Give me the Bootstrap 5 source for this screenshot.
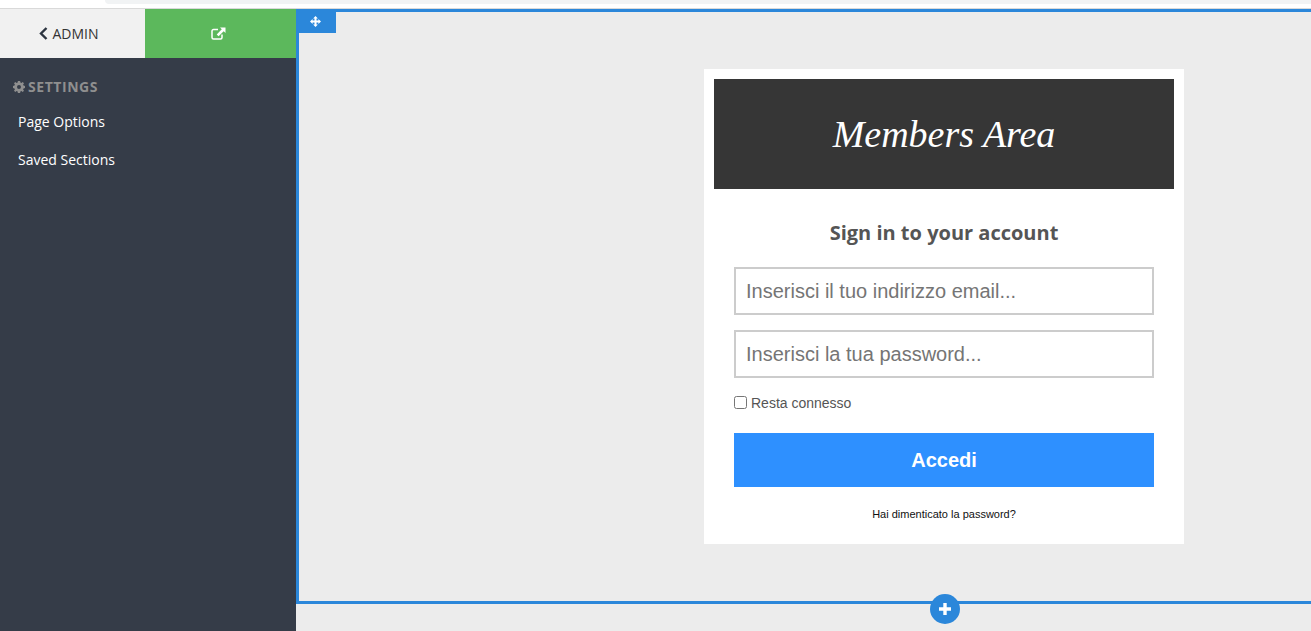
<!DOCTYPE html>
<html lang="it">
<head>
<meta charset="utf-8">
<title>Members Area</title>
<link href="https://cdn.jsdelivr.net/npm/bootstrap@5.3.0/dist/css/bootstrap.min.css" rel="stylesheet">
<style>
html,body{height:631px;overflow:hidden;background:#ececec;font-family:"Open Sans",sans-serif}
.top-strip{height:9px;background:#fff;border-bottom:1px solid #d9d9d9;padding-left:105px}
.top-pill{height:4px;background:#f1f3f4;border-bottom-left-radius:8px}
.side-col{width:296px;height:622px;background:#353c48}
.tab-admin{height:49px;width:145px;background:#f1f1f1;color:#333;font-size:14px;padding-right:7px}
.tab-view{height:49px;width:151px;background:#5cb85c;padding-right:4px}
.side-head{color:#8f8f8f;font-size:14px;font-weight:700;letter-spacing:.55px;padding:19px 0 0 13px;line-height:19px;gap:3px}
.side-link{display:block;color:#fff;font-size:14px;line-height:38px;padding-left:18px;text-decoration:none}
.side-list{padding-top:7px}
.canvas-wrap{flex:1 1 auto;height:622px;position:relative}
.canvas-box{height:595px;border-top:3px solid #2b87da;border-bottom:3px solid #2b87da;border-left:3px solid #2b87da;padding:57px 127px 0 0}
.move-tag{position:absolute;left:0;top:0;width:40px;height:24px;background:#2b87da;padding-right:1px}
.add-dot{position:absolute;left:634px;top:585px;width:30px;height:30px;border-radius:50%;background:#2b87da}
.login-box{width:480px;height:475px;background:#fff;padding:10px}
.login-banner{height:110px;background:#363636;color:#fff;font-family:"Liberation Serif",serif;font-style:italic;font-size:38px}
.login-body{padding:0 20px}
.login-title{font-size:20px;font-weight:700;color:#555;text-align:center;line-height:27px;margin:30px 0 21px}
.login-input{display:block;width:100%;height:48px;border:2px solid #ccc;border-radius:0;padding:0 10px;font-family:"Liberation Sans",sans-serif;font-size:20px;margin-bottom:15px;outline:0}
.login-input::placeholder{color:#757575;opacity:1}
.keep-row{font-family:"Liberation Sans",sans-serif;font-size:14px;color:#555;height:20px;margin:4px 0 20px}
.keep-row input{width:13px;height:13px;margin:-2px 4px 0 0}
.login-btn{height:54px;width:100%;background:#2e90ff;color:#fff;border:0;border-radius:0;font-family:"Liberation Sans",sans-serif;font-weight:700;font-size:20px}
.forgot{display:block;text-align:center;font-family:"Liberation Sans",sans-serif;font-size:11px;color:#111;text-decoration:none;margin-top:21px;line-height:12px}
</style>
</head>
<body>
<div class="top-strip"><div class="top-pill"></div></div>
<div class="d-flex">
  <aside class="side-col flex-shrink-0">
    <div class="d-flex">
      <a class="tab-admin d-flex align-items-center justify-content-center gap-1 text-decoration-none" href="#">
        <svg width="9" height="13" viewBox="0 0 9 13"><path d="M7.500 1 2 6.500 7.500 12" fill="none" stroke="#2c3440" stroke-width="2.400"/></svg>ADMIN</a>
      <a class="tab-view d-flex align-items-center justify-content-center" href="#" aria-label="Open">
        <svg width="15" height="13" viewBox="0 0 15 13"><path d="M11 7.500V10.500A1.500 1.500 0 0 1 9.500 12H2.500A1.500 1.500 0 0 1 1 10.500V4A1.500 1.500 0 0 1 2.500 2.500H7" fill="none" stroke="#fff" stroke-width="1.500"/><path d="M9 .5h5.500V6L12.700 4.200 7.600 9.300 5.700 7.400 10.800 2.300z" fill="#fff"/></svg>
      </a>
    </div>
    <div class="side-head d-flex align-items-center">
      <svg width="12" height="12" viewBox="0 0 12 12"><path fill="#8f8f8f" fill-rule="evenodd" d="M4.900 0h2.200l.3 1.500 1 .4L9.700 1l1.300 1.300-.9 1.300.4 1L12 4.900v2.200l-1.500.3-.4 1 .9 1.300L9.700 11l-1.300-.9-1 .4-.3 1.500H4.900l-.3-1.500-1-.4-1.300.9L1 9.700l.9-1.300-.4-1L0 7.100V4.900l1.500-.3.4-1L1 2.300 2.300 1l1.300.9 1-.4zM6 4a2 2 0 1 0 0 4 2 2 0 0 0 0-4z"/></svg>
      SETTINGS</div>
    <nav class="side-list">
      <a class="side-link" href="#">Page Options</a>
      <a class="side-link" href="#">Saved Sections</a>
    </nav>
  </aside>
  <main class="canvas-wrap">
    <div class="canvas-box d-flex justify-content-end">
      <div class="login-box">
        <div class="login-banner d-flex align-items-center justify-content-center">Members Area</div>
        <form class="login-body">
          <div class="login-title">Sign in to your account</div>
          <input class="login-input" type="text" placeholder="Inserisci il tuo indirizzo email...">
          <input class="login-input" type="password" placeholder="Inserisci la tua password...">
          <label class="keep-row d-flex align-items-center"><input type="checkbox">Resta connesso</label>
          <button class="login-btn" type="button">Accedi</button>
          <a class="forgot" href="#">Hai dimenticato la password?</a>
        </form>
      </div>
    </div>
    <div class="move-tag d-flex align-items-center justify-content-center">
      <svg width="11" height="11" viewBox="0 0 11 11"><path fill="#fff" d="M5.500 0 7.900 2.600H6.500V4.500H8.400V3.100L11 5.500 8.400 7.900V6.500H6.500V8.400H7.900L5.500 11 3.100 8.400H4.500V6.500H2.600V7.900L0 5.500 2.600 3.100V4.500H4.500V2.600H3.100z"/></svg>
    </div>
    <div class="add-dot d-flex align-items-center justify-content-center">
      <svg width="12" height="12" viewBox="0 0 12 12"><path fill="#fff" d="M4.300 0h3.400v4.300H12v3.400H7.700V12H4.300V7.700H0V4.300h4.300z"/></svg>
    </div>
  </main>
</div>
<script src="https://cdn.jsdelivr.net/npm/bootstrap@5.3.0/dist/js/bootstrap.bundle.min.js"></script>
</body>
</html>
